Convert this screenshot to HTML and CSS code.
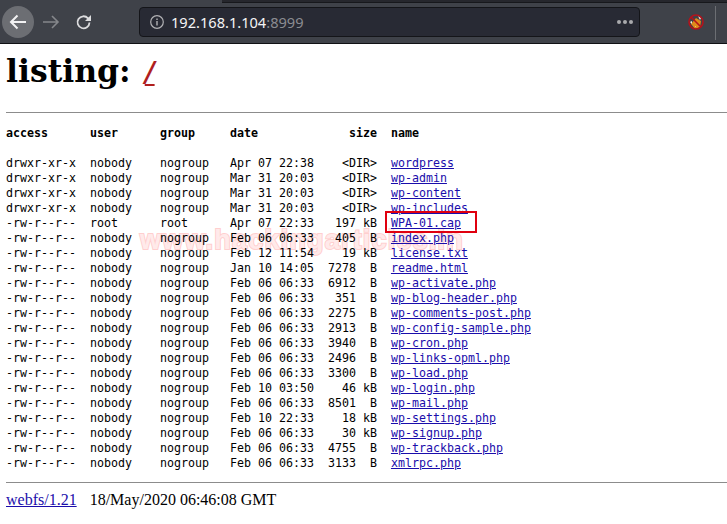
FILE: index.html
```
<!DOCTYPE html>
<html lang="en">
<head>
<meta charset="utf-8">
<title>listing: /</title>
<link rel="stylesheet" href="styles.css">
</head>
<body>
<div class="toolbar">
  <div class="tabstrip"></div>
  <div class="nav">
    <span class="back">
      <svg width="22" height="22" viewBox="0 0 22 22"><path d="M19 11H4M10.500 4.500L4 11l6.500 6.500" fill="none" stroke="#f2f2f3" stroke-width="2"/></svg>
    </span>
    <svg class="fwd" width="18" height="18" viewBox="0 0 18 18"><path d="M1 9h15M10 3l6 6-6 6" fill="none" stroke="#85878b" stroke-width="1.600"/></svg>
    <svg class="reload" width="18" height="18" viewBox="0 0 18 18"><path d="M14.500 9.500a6 6 0 1 1-1.500-4.200L15 7" fill="none" stroke="#dcdcde" stroke-width="1.800"/><path d="M16 2v6h-6z" fill="#dcdcde"/></svg>
  </div>
  <div class="urlbar">
    <svg class="info" width="16" height="16" viewBox="0 0 16 16"><circle cx="8" cy="8" r="6.300" fill="none" stroke="#b1b1b4" stroke-width="1.200"/><path d="M8 7v4.500M8 4.500v1.400" stroke="#b1b1b4" stroke-width="1.400"/></svg>
    <span class="host">192.168.1.104<span class="port">:8999</span></span>
    <span class="dots"><i></i><i></i><i></i></span>
  </div>
  <div class="ext">
    <svg width="18" height="18" viewBox="0 0 18 18"><path d="M4 11l5-6 5 3-1 6-5 2z" fill="#e08a1a"/><path d="M11 3l3 2-1 2zM3 9l2-1 0 3zM8 13l1 0 0 1z" fill="#f3ead9"/><circle cx="9" cy="9" r="7" fill="none" stroke="#b5121b" stroke-width="1.600"/><path d="M4 4l10 10" stroke="#b5121b" stroke-width="1.600"/></svg>
  </div>
  <div class="sep"></div>
</div>
<main class="page">
  <h1 class="title">listing: <a class="path" href="#">/</a></h1>
  <hr class="rule">
  <div class="listing">
    <div class="watermark">www.hackingarticles.in</div>
<pre class="table"><b>access      user      group     date             size  name</b>

drwxr-xr-x  nobody    nogroup   Apr 07 22:38    &lt;DIR&gt;  <a href="#">wordpress</a>
drwxr-xr-x  nobody    nogroup   Mar 31 20:03    &lt;DIR&gt;  <a href="#">wp-admin</a>
drwxr-xr-x  nobody    nogroup   Mar 31 20:03    &lt;DIR&gt;  <a href="#">wp-content</a>
drwxr-xr-x  nobody    nogroup   Mar 31 20:03    &lt;DIR&gt;  <a href="#">wp-includes</a>
-rw-r--r--  root      root      Apr 07 22:33   197 kB  <a href="#">WPA-01.cap</a>
-rw-r--r--  nobody    nogroup   Feb 06 06:33   405  B  <a href="#">index.php</a>
-rw-r--r--  nobody    nogroup   Feb 12 11:54    19 kB  <a href="#">license.txt</a>
-rw-r--r--  nobody    nogroup   Jan 10 14:05  7278  B  <a href="#">readme.html</a>
-rw-r--r--  nobody    nogroup   Feb 06 06:33  6912  B  <a href="#">wp-activate.php</a>
-rw-r--r--  nobody    nogroup   Feb 06 06:33   351  B  <a href="#">wp-blog-header.php</a>
-rw-r--r--  nobody    nogroup   Feb 06 06:33  2275  B  <a href="#">wp-comments-post.php</a>
-rw-r--r--  nobody    nogroup   Feb 06 06:33  2913  B  <a href="#">wp-config-sample.php</a>
-rw-r--r--  nobody    nogroup   Feb 06 06:33  3940  B  <a href="#">wp-cron.php</a>
-rw-r--r--  nobody    nogroup   Feb 06 06:33  2496  B  <a href="#">wp-links-opml.php</a>
-rw-r--r--  nobody    nogroup   Feb 06 06:33  3300  B  <a href="#">wp-load.php</a>
-rw-r--r--  nobody    nogroup   Feb 10 03:50    46 kB  <a href="#">wp-login.php</a>
-rw-r--r--  nobody    nogroup   Feb 06 06:33  8501  B  <a href="#">wp-mail.php</a>
-rw-r--r--  nobody    nogroup   Feb 10 22:33    18 kB  <a href="#">wp-settings.php</a>
-rw-r--r--  nobody    nogroup   Feb 06 06:33    30 kB  <a href="#">wp-signup.php</a>
-rw-r--r--  nobody    nogroup   Feb 06 06:33  4755  B  <a href="#">wp-trackback.php</a>
-rw-r--r--  nobody    nogroup   Feb 06 06:33  3133  B  <a href="#">xmlrpc.php</a></pre>
    <div class="highlight"></div>
  </div>
  <hr class="rule rule-foot">
  <p class="foot"><a href="#">webfs/1.21</a><span class="stamp">18/May/2020 06:46:08 GMT</span></p>
</main>
</body>
</html>
```
FILE: styles.css
```
html, body {
  margin: 0;
  padding: 0;
  background: #fff;
  overflow: hidden;
}
body {
  font-family: "DejaVu Serif", serif;
  color: #000;
  height: 524px;
}
.toolbar {
  position: relative;
  display: flex;
  align-items: center;
  height: 44px;
  box-sizing: border-box;
  background: #3f4249;
  border-bottom: 1px solid #101114;
}
.tabstrip {
  position: absolute;
  top: 0;
  left: 222px;
  right: 0;
  height: 3px;
  background: #26272d;
  border-bottom: 1px solid #17181c;
  box-sizing: border-box;
}
.nav {
  display: flex;
  align-items: center;
  width: 139px;
  flex: none;
  padding-left: 2px;
  box-sizing: border-box;
}
.back {
  width: 32px;
  height: 32px;
  border-radius: 50%;
  background: #6c6e73;
  display: flex;
  align-items: center;
  justify-content: center;
}
.fwd { margin-left: 8px; }
.reload { margin-left: 15px; }
.urlbar {
  display: flex;
  align-items: center;
  width: 501px;
  height: 30px;
  flex: none;
  box-sizing: border-box;
  background: #282a34;
  border: 1px solid #141519;
  border-radius: 4px;
  padding: 0 6px 0 9px;
  color: #f4f4f5;
}
.info { flex: none; }
.host { margin-left: 6px; font-family: "Noto Sans", sans-serif; font-size: 14.600px; }
.port { color: #8b8c91; }
.dots {
  margin-left: auto;
  display: flex;
  gap: 2px;
}
.dots i {
  width: 4px;
  height: 4px;
  border-radius: 50%;
  background: #a9aaad;
}
.ext {
  margin-left: 47px;
  width: 18px;
  height: 18px;
  flex: none;
}
.sep {
  position: absolute;
  left: 715px;
  top: 6px;
  width: 1px;
  height: 34px;
  background: #6c6e73;
}
.page {
  padding: 0 0 0 6px;
}
.title {
  margin: 0;
  padding-top: 6px;
  font-size: 31.500px;
  line-height: 42px;
  font-weight: bold;
}
.path {
  margin-left: 3px;
  font-size: 27px;
  line-height: 1;
  color: #b01f1f;
  font-style: italic;
  font-weight: bold;
}
.rule {
  margin: 20px 0 0 0;
  border: 0;
  height: 1px;
  background: #8c8c8c;
}
.listing {
  position: relative;
  margin-top: 13px;
}
.table {
  position: relative;
  margin: 0;
  font-family: "DejaVu Sans Mono", monospace;
  font-size: 11.630px;
  line-height: 15px;
}
.table a, .foot a { color: #1a0dab; }
.watermark {
  position: absolute;
  left: 134px;
  top: 99px;
  font: bold 27px "Liberation Sans", sans-serif;
  letter-spacing: 1.200px;
  color: #ffeaea;
  -webkit-text-stroke: 2px #ffcfcf;
  paint-order: stroke fill;
  white-space: nowrap;
}
.highlight {
  position: absolute;
  left: 379px;
  top: 85px;
  width: 92px;
  height: 22px;
  box-sizing: border-box;
  border: 2px solid #e0000f;
}
.rule-foot { margin-top: 11px; }
.foot {
  margin: 8px 0 0 0;
  font-family: "Liberation Serif", serif;
  font-size: 16px;
  line-height: 18px;
}
.stamp { margin-left: 13px; }
```
